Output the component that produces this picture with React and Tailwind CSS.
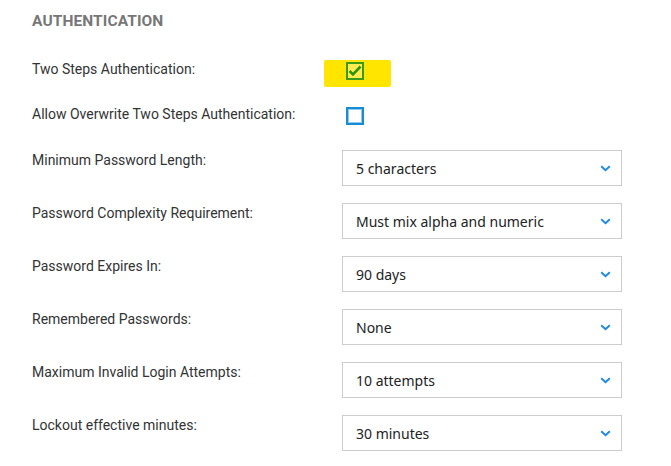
import React from 'react'

const SELECTS = [
  { label: 'Minimum Password Length:', value: '5 characters' },
  { label: 'Password Complexity Requirement:', value: 'Must mix alpha and numeric' },
  { label: 'Password Expires In:', value: '90 days' },
  { label: 'Remembered Passwords:', value: 'None' },
  { label: 'Maximum Invalid Login Attempts:', value: '10 attempts' },
  { label: 'Lockout effective minutes:', value: '30 minutes' },
]

function Chevron() {
  return (
    <svg width="11" height="7" viewBox="0 0 11 7" className="shrink-0">
      <polyline points="1.2,1.2 5.5,5.3 9.8,1.2" fill="none" stroke="#1e88e5" strokeWidth="1.9" />
    </svg>
  )
}

function Select({ value }) {
  return (
    <div className="flex items-center justify-between w-[280px] h-[36px] border border-[#cccccc] bg-white pl-[13px] pr-[10px]">
      <span className="text-[14px] text-[#222] font-['Segoe_UI','Noto_Sans',sans-serif]">{value}</span>
      <Chevron />
    </div>
  )
}

export default function App() {
  return (
    <div className="w-[671px] h-[466px] bg-white px-8 font-['Roboto',sans-serif] text-[14px] text-[#333] overflow-hidden">
      {/* header */}
      <div className="h-[59px] pt-[11px]">
        <h2 className="text-[15.5px] leading-5 font-bold text-[#777] tracking-[0.1px]">AUTHENTICATION</h2>
      </div>

      {/* Two steps */}
      <div className="flex h-[45px]">
        <div className="w-[292px] leading-5">Two Steps Authentication:</div>
        <div className="mt-[1px] w-[67px] h-[27px] bg-[#ffe500] rounded-[2px] pl-[22px] pt-[2px]">
          <div className="w-[18px] h-[18px] border-2 border-[#3a9a18] bg-white/30 flex items-center justify-center">
            <svg width="14" height="12" viewBox="0 0 14 12">
              <polyline points="1.5,6 5,9.5 12.5,1.5" fill="none" stroke="#2e9414" strokeWidth="2.6" />
            </svg>
          </div>
        </div>
      </div>

      {/* Allow overwrite */}
      <div className="flex h-[46px]">
        <div className="w-[314px] leading-5">Allow Overwrite Two Steps Authentication:</div>
        <div className="mt-[3px] w-[18px] h-[18px] border-2 border-[#1a8bd0] bg-white shadow-[inset_0_0_0_1px_#8fcaf0]" />
      </div>

      {SELECTS.map((s) => (
        <div key={s.label} className="flex h-[53px]">
          <div className="w-[310px] leading-5">{s.label}</div>
          <Select value={s.value} />
        </div>
      ))}
    </div>
  )
}
